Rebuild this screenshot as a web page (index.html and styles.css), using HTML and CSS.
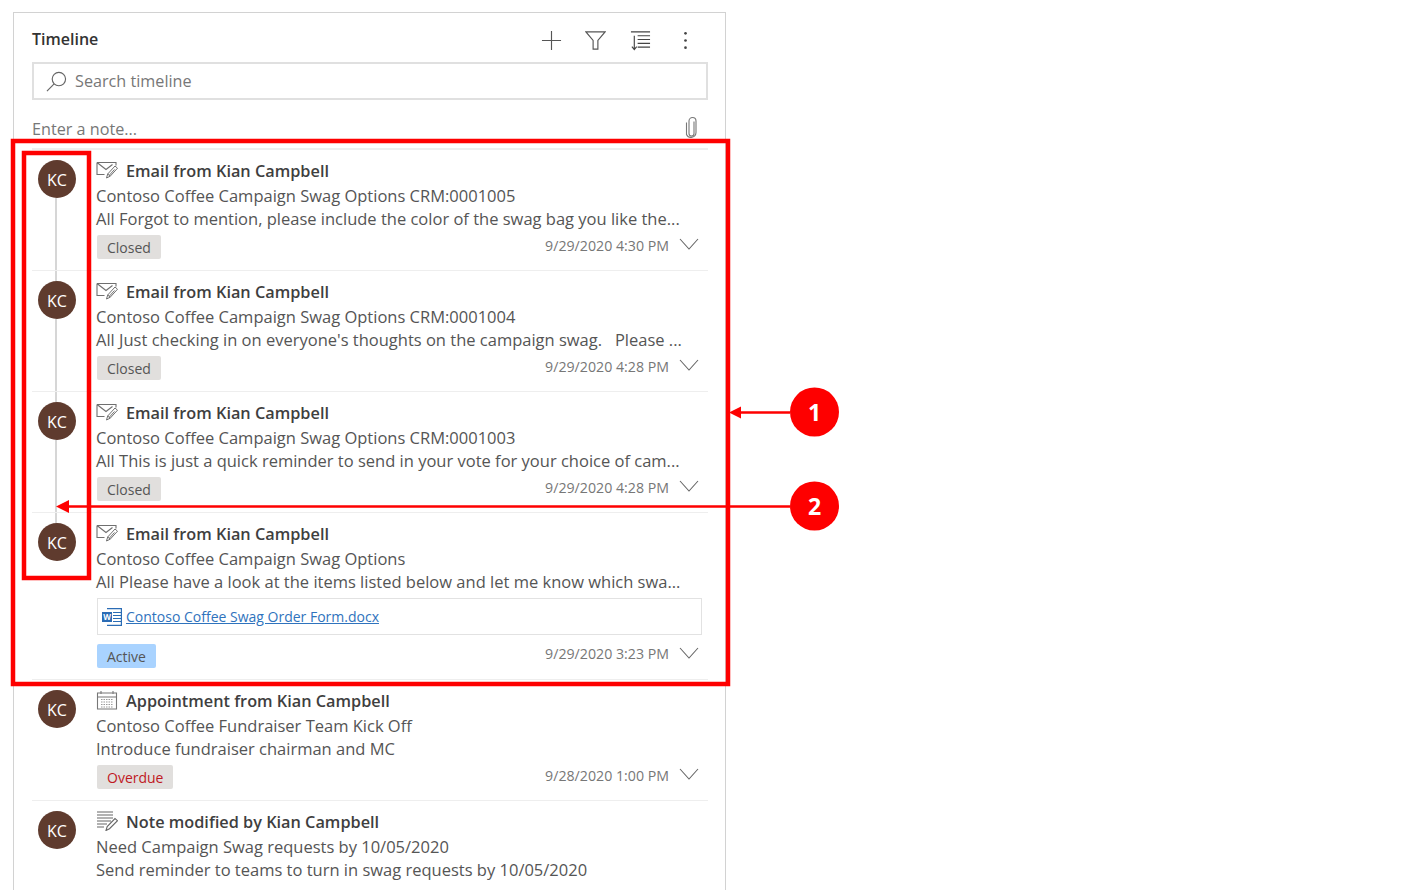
FILE: index.html
```html
<!DOCTYPE html>
<html lang="en">
<head>
  <meta charset="UTF-8" />
  <title>Timeline</title>
  <link rel="stylesheet" href="styles.css">
</head>
<body>

  <svg width="0" height="0" class="defs">
    <symbol id="i-mail" viewBox="0 0 22 18">
      <path d="M1 1.500h19v3M1 1.500v12h7.500M1 1.500l9 7 6.500-5" fill="none" stroke="#6f6f6f" stroke-width="1.100"/>
      <path d="M10.500 17l1.200-4 7.300-8 2.500 2.200-7.300 8zM11.700 13l2.500 2.200M13.500 14l5-5.500" fill="none" stroke="#6f6f6f" stroke-width="1"/>
    </symbol>
    <symbol id="i-cal" viewBox="0 0 22 20">
      <path d="M1.500 3h19v16h-19zM1.500 7h19M5 1v3M17 1v3" fill="none" stroke="#777" stroke-width="1.100"/>
      <path d="M5 9.500h12M5 12h12M5 14.500h12M5 17h12" stroke="#999" stroke-width="1.200" stroke-dasharray="1.500 1" fill="none"/>
    </symbol>
    <symbol id="i-note" viewBox="0 0 22 20">
      <path d="M1 1h16M1 4h16M1 7h16M1 10h14M1 13h10M1 16h7" stroke="#666" stroke-width="1.200" fill="none"/>
      <path d="M10 19.500l1.200-4 7.800-8 2.500 2.200-8 8z" fill="#fff" stroke="#666" stroke-width="1.100"/>
    </symbol>
    <symbol id="i-chev" viewBox="0 0 20 13">
      <path d="M1 1l9 10 9-10" fill="none" stroke="#666" stroke-width="1.100"/>
    </symbol>
  </svg>

  <main class="panel">
    <header class="head">
      <h1 class="head-title">Timeline</h1>
      <div class="head-tools">
        <svg class="tool" viewBox="0 0 22 22"><path d="M11 1v20M1 11h20" stroke="#555" stroke-width="1.200" fill="none"/></svg>
        <svg class="tool" viewBox="0 0 22 22"><path d="M1 2h20l-7.500 9v9h-5v-9z" stroke="#555" stroke-width="1.200" fill="none"/></svg>
        <svg class="tool" viewBox="0 0 22 22"><path d="M1 2h20M8 6h13M8 10h13M8 14h13M8 18h13M4.500 6v14M2 17.500l2.500 3 2.500-3" stroke="#444" stroke-width="1.200" fill="none"/></svg>
        <svg class="tool" viewBox="0 0 22 22"><circle cx="11" cy="3.500" r="1.400" fill="#444"/><circle cx="11" cy="11" r="1.400" fill="#444"/><circle cx="11" cy="18.500" r="1.400" fill="#444"/></svg>
      </div>
    </header>

    <div class="search">
      <svg class="search-icon" viewBox="0 0 22 22"><circle cx="13.500" cy="8.500" r="7" fill="none" stroke="#666" stroke-width="1.200"/><path d="M8.500 13.500L1 21" stroke="#666" stroke-width="1.200"/></svg>
      <span>Search timeline</span>
    </div>

    <div class="note">
      <span>Enter a note...</span>
      <svg class="clip" viewBox="0 0 12 22"><path d="M8.500 5v12a2.500 2.500 0 0 1-5 0V4.500a3.500 3.500 0 0 1 7 0V16a5 5 0 0 1-9.500 2V6" transform="translate(.5 .5)" fill="none" stroke="#777" stroke-width="1.100"/></svg>
    </div>

    <section class="list">
      <article class="row row-first">
        <div class="rail"><div class="avatar">KC</div></div>
        <div class="body">
          <h2 class="title"><svg class="type"><use href="#i-mail"/></svg>Email from Kian Campbell</h2>
          <p class="line">Contoso Coffee Campaign Swag Options CRM:0001005</p>
          <p class="line">All Forgot to mention, please include the color of the swag bag you like the...</p>
          <div class="foot">
            <span class="pill">Closed</span>
            <time class="date">9/29/2020 4:30 PM</time>
            <svg class="chev"><use href="#i-chev"/></svg>
          </div>
        </div>
      </article>

      <article class="row">
        <div class="rail"><div class="avatar">KC</div></div>
        <div class="body">
          <h2 class="title"><svg class="type"><use href="#i-mail"/></svg>Email from Kian Campbell</h2>
          <p class="line">Contoso Coffee Campaign Swag Options CRM:0001004</p>
          <p class="line">All Just checking in on everyone's thoughts on the campaign swag. &nbsp; Please ...</p>
          <div class="foot">
            <span class="pill">Closed</span>
            <time class="date">9/29/2020 4:28 PM</time>
            <svg class="chev"><use href="#i-chev"/></svg>
          </div>
        </div>
      </article>

      <article class="row">
        <div class="rail"><div class="avatar">KC</div></div>
        <div class="body">
          <h2 class="title"><svg class="type"><use href="#i-mail"/></svg>Email from Kian Campbell</h2>
          <p class="line">Contoso Coffee Campaign Swag Options CRM:0001003</p>
          <p class="line">All This is just a quick reminder to send in your vote for your choice of cam...</p>
          <div class="foot">
            <span class="pill">Closed</span>
            <time class="date">9/29/2020 4:28 PM</time>
            <svg class="chev"><use href="#i-chev"/></svg>
          </div>
        </div>
      </article>

      <article class="row row-end">
        <div class="rail"><div class="avatar">KC</div></div>
        <div class="body">
          <h2 class="title"><svg class="type"><use href="#i-mail"/></svg>Email from Kian Campbell</h2>
          <p class="line">Contoso Coffee Campaign Swag Options</p>
          <p class="line">All Please have a look at the items listed below and let me know which swa...</p>
          <div class="attach">
            <svg class="word" viewBox="0 0 20 18">
              <path d="M5 .6h14.400v16.800H5" fill="none" stroke="#2b6cb5" stroke-width="1.200"/>
              <path d="M11 4.500h8M11 7.500h8M11 10.500h8M11 13.500h8" stroke="#2b6cb5" stroke-width="1.100"/>
              <rect x="0" y="4" width="10" height="10" fill="#2b6cb5"/>
              <text x="5" y="12" class="word-w">W</text>
            </svg>
            <a href="#" class="attach-link">Contoso Coffee Swag Order Form.docx</a>
          </div>
          <div class="foot foot-attach">
            <span class="pill pill-active">Active</span>
            <time class="date">9/29/2020 3:23 PM</time>
            <svg class="chev"><use href="#i-chev"/></svg>
          </div>
        </div>
      </article>

      <article class="row row-solo">
        <div class="rail"><div class="avatar">KC</div></div>
        <div class="body">
          <h2 class="title"><svg class="type"><use href="#i-cal"/></svg>Appointment from Kian Campbell</h2>
          <p class="line">Contoso Coffee Fundraiser Team Kick Off</p>
          <p class="line">Introduce fundraiser chairman and MC</p>
          <div class="foot">
            <span class="pill pill-overdue">Overdue</span>
            <time class="date">9/28/2020 1:00 PM</time>
            <svg class="chev"><use href="#i-chev"/></svg>
          </div>
        </div>
      </article>

      <article class="row row-solo">
        <div class="rail"><div class="avatar">KC</div></div>
        <div class="body">
          <h2 class="title"><svg class="type"><use href="#i-note"/></svg>Note modified by Kian Campbell</h2>
          <p class="line">Need Campaign Swag requests by 10/05/2020</p>
          <p class="line">Send reminder to teams to turn in swag requests by 10/05/2020</p>
        </div>
      </article>
    </section>
  </main>

  <!-- callouts drawn on top of the screenshot -->
  <svg class="marks" width="1407" height="890" viewBox="0 0 1407 890">
    <rect x="13" y="141" width="715" height="543" fill="none" stroke="#fe0000" stroke-width="4.500"/>
    <rect x="24" y="153" width="65" height="425" fill="none" stroke="#fe0000" stroke-width="4.500"/>
    <path d="M738 412.500H790M66 506.500H790" stroke="#fe0000" stroke-width="2.500"/>
    <path d="M729 412.500l12-6v12zM56 506.500l13-6.500v13z" fill="#fe0000"/>
    <circle cx="814.500" cy="412" r="24.500" fill="#fe0000"/>
    <circle cx="814.500" cy="506" r="24.500" fill="#fe0000"/>
    <text x="814.500" y="421" class="mark-num">1</text>
    <text x="814.500" y="515" class="mark-num">2</text>
  </svg>

</body>
</html>
```

FILE: styles.css
```css
html, body {
  margin: 0;
  height: 890px;
  overflow: hidden;
  background: #fff;
}
body {
  font-family: "Open Sans", "Noto Sans", Arial, sans-serif;
  color: #444;
}
h1, h2, p {
  margin: 0;
  font-weight: normal;
}
.defs {
  position: absolute;
}

.panel {
  box-sizing: border-box;
  width: 713px;
  height: 878px;
  margin: 12px 0 0 13px;
  padding: 0 17px 0 18px;
  border: 1px solid #d2d2d2;
  border-bottom: none;
}

.head {
  display: flex;
  align-items: center;
  justify-content: space-between;
  height: 49px;
}
.head-title {
  padding-top: 3px;
  font-size: 16px;
  font-weight: 600;
  color: #333;
}
.head-tools {
  display: flex;
  gap: 23.800px;
  margin: 5px 12px 0 0;
}
.tool {
  width: 21px;
  height: 21px;
}

.search {
  display: flex;
  align-items: center;
  gap: 8px;
  box-sizing: border-box;
  height: 38px;
  padding-left: 12px;
  border: 2px solid #e0e0e0;
  font-size: 16.200px;
  color: #777;
}
.search-icon {
  width: 21px;
  height: 21px;
}

.note {
  display: flex;
  align-items: center;
  justify-content: space-between;
  box-sizing: border-box;
  height: 49px;
  border-bottom: 1px solid #eee;
  font-size: 16.200px;
  color: #777;
}
.note span {
  padding-top: 9px;
}
.clip {
  width: 12px;
  height: 22px;
  margin: 5px 11px 0 0;
}

.row {
  display: flex;
  box-sizing: border-box;
  height: 121px;
  border-top: 1px solid #eee;
}
.row-end {
  height: 167px;
}
.row-solo {
  height: 121px;
}

.rail {
  display: flex;
  flex-direction: column;
  align-items: center;
  flex: none;
  width: 38px;
  margin: 0 21px 0 6px;
}
.rail::before, .rail::after {
  content: "";
  width: 2px;
  margin-right: 2px;
  background: #d6d6d6;
}
.rail::before {
  height: 10px;
}
.rail::after {
  flex: 1;
}
.row-first .rail::before {
  background: transparent;
}
.row-end .rail::after, .row-solo .rail::after, .row-solo .rail::before {
  background: transparent;
}
.avatar {
  flex: none;
  width: 38px;
  height: 38px;
  border-radius: 50%;
  background: #5f3b2e;
  color: #fff;
  font-size: 16px;
  line-height: 40px;
  text-align: center;
}

.body {
  flex: 1;
  min-width: 0;
}
.title {
  display: flex;
  align-items: center;
  height: 24px;
  margin: 9px 0 1px;
  font-size: 16.300px;
  font-weight: 600;
  color: #3f3f3f;
}
.type {
  flex: none;
  width: 22px;
  height: 20px;
  margin: -3px 8px 0 -1px;
}
.line {
  height: 23px;
  margin-left: -1px;
  font-size: 16.500px;
  line-height: 23px;
  color: #555;
  white-space: nowrap;
}
.foot {
  display: flex;
  align-items: center;
  height: 24px;
  margin-top: 5px;
}
.foot-attach {
  margin-top: 8px;
  height: 25px;
}
.pill {
  box-sizing: border-box;
  height: 24px;
  padding: 0 10px;
  border-radius: 2px;
  background: #e1dfdd;
  font-size: 14px;
  line-height: 25px;
  color: #555;
}
.pill-active {
  background: #a9d3ff;
}
.pill-overdue {
  color: #c0181f;
}
.date {
  margin: -4px 10px 0 auto;
  font-size: 14.200px;
  color: #777;
}
.chev {
  width: 20px;
  height: 13px;
  margin: -5px 9px 0 0;
}

.attach {
  display: flex;
  align-items: center;
  gap: 4px;
  box-sizing: border-box;
  width: 605px;
  height: 37px;
  margin-top: 5px;
  padding-left: 4px;
  border: 1px solid #e2e2e2;
}
.word {
  flex: none;
  width: 20px;
  height: 18px;
}
.word-w {
  font-family: "Open Sans", sans-serif;
  font-size: 8px;
  font-weight: 700;
  fill: #fff;
  text-anchor: middle;
}
.attach-link {
  font-size: 14px;
  color: #2f73bd;
}

.marks {
  position: absolute;
  top: 0;
  left: 0;
}
.mark-num {
  font-family: "Open Sans", sans-serif;
  font-size: 23px;
  font-weight: 700;
  fill: #fff;
  text-anchor: middle;
}
```
